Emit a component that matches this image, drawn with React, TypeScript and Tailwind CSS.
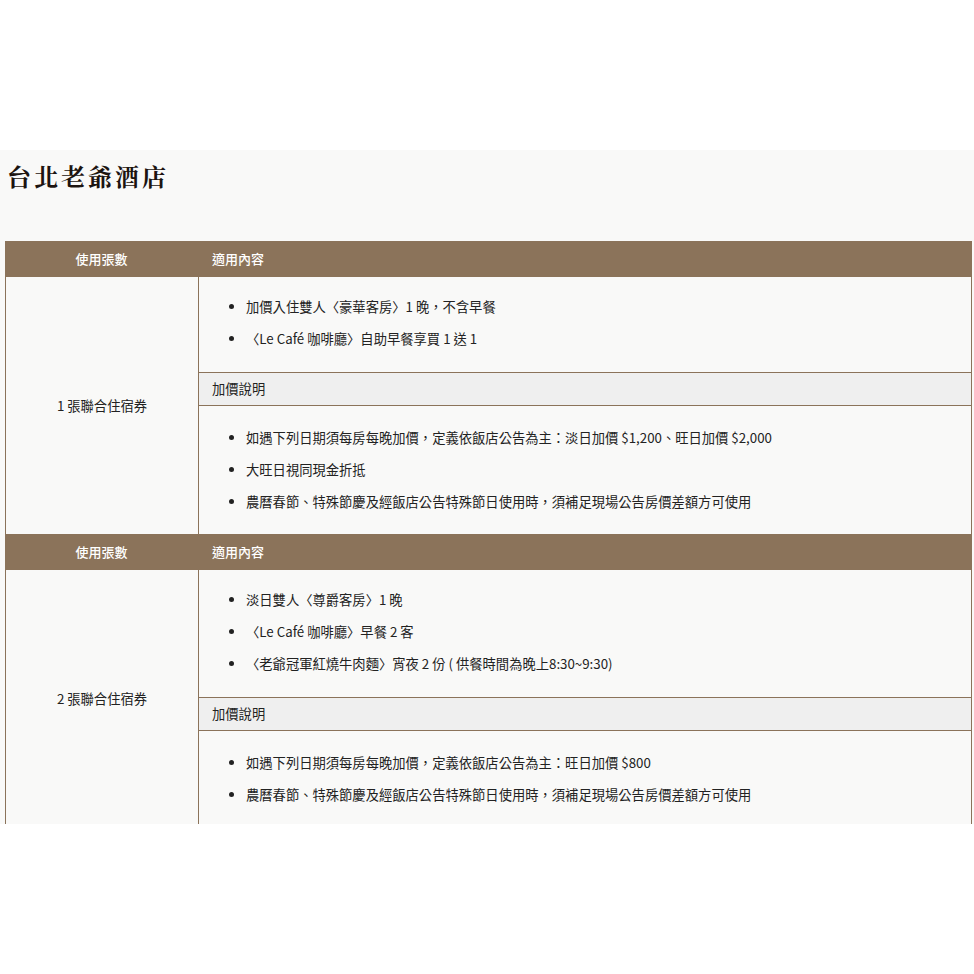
import React from "react";

const sans = { fontFamily: '"Noto Sans CJK TC", "Noto Sans", sans-serif' };

type Block = { label: string; main: string[]; extra: string[] };

const blocks: Block[] = [
  {
    label: "1 張聯合住宿券",
    main: ["加價入住雙人〈豪華客房〉1 晚，不含早餐", "〈Le Café 咖啡廳〉自助早餐享買 1 送 1"],
    extra: [
      "如遇下列日期須每房每晚加價，定義依飯店公告為主：淡日加價 $1,200、旺日加價 $2,000",
      "大旺日視同現金折抵",
      "農曆春節、特殊節慶及經飯店公告特殊節日使用時，須補足現場公告房價差額方可使用",
    ],
  },
  {
    label: "2 張聯合住宿券",
    main: [
      "淡日雙人〈尊爵客房〉1 晚",
      "〈Le Café 咖啡廳〉早餐 2 客",
      "〈老爺冠軍紅燒牛肉麵〉宵夜 2 份 ( 供餐時間為晚上8:30~9:30)",
    ],
    extra: [
      "如遇下列日期須每房每晚加價，定義依飯店公告為主：旺日加價 $800",
      "農曆春節、特殊節慶及經飯店公告特殊節日使用時，須補足現場公告房價差額方可使用",
    ],
  },
];

function Header() {
  return (
    <div className="flex h-[36px] bg-[#8b735a] text-white text-[13px] font-medium items-center">
      <div className="w-[193px] text-center">使用張數</div>
      <div className="flex-1 pl-[14px]">適用內容</div>
    </div>
  );
}

function Row({ b }: { b: Block }) {
  return (
    <div className="flex border-x border-[#8b735a] text-[13.3px] text-[#222]">
      <div className="w-[193px] shrink-0 flex items-center justify-center border-r border-[#8b735a]">
        {b.label}
      </div>
      <div className="flex-1 flex flex-col">
        <ul className="list-disc pl-[47px] pt-[14px] pb-[17px]">
          {b.main.map((t) => (
            <li key={t} className="leading-[32px]">{t}</li>
          ))}
        </ul>
        <div className="h-[34px] flex items-center pl-[13px] bg-[#efefef] border-y border-[#8b735a]">
          加價說明
        </div>
        <ul className="list-disc pl-[47px] pt-[16px] pb-[16px]">
          {b.extra.map((t) => (
            <li key={t} className="leading-[32px]">{t}</li>
          ))}
        </ul>
      </div>
    </div>
  );
}

export default function App() {
  return (
    <div className="w-[974px] h-[974px] bg-white" style={sans}>
      <div className="h-[150px]" />
      <div className="h-[674px] overflow-hidden bg-[#f9f9f8]">
        <h1
          className="pl-[7px] pt-[11px] text-[24px] font-bold tracking-[3px] text-[#1c1410] leading-[30px]"
          style={{ fontFamily: '"Noto Serif CJK TC", "Noto Serif TC", "Liberation Serif", serif' }}
        >
          台北老爺酒店
        </h1>
        <div className="mx-[5px] mr-[2px] mt-[50px]">
          {blocks.map((b) => (
            <React.Fragment key={b.label}>
              <Header />
              <Row b={b} />
            </React.Fragment>
          ))}
        </div>
      </div>
    </div>
  );
}
